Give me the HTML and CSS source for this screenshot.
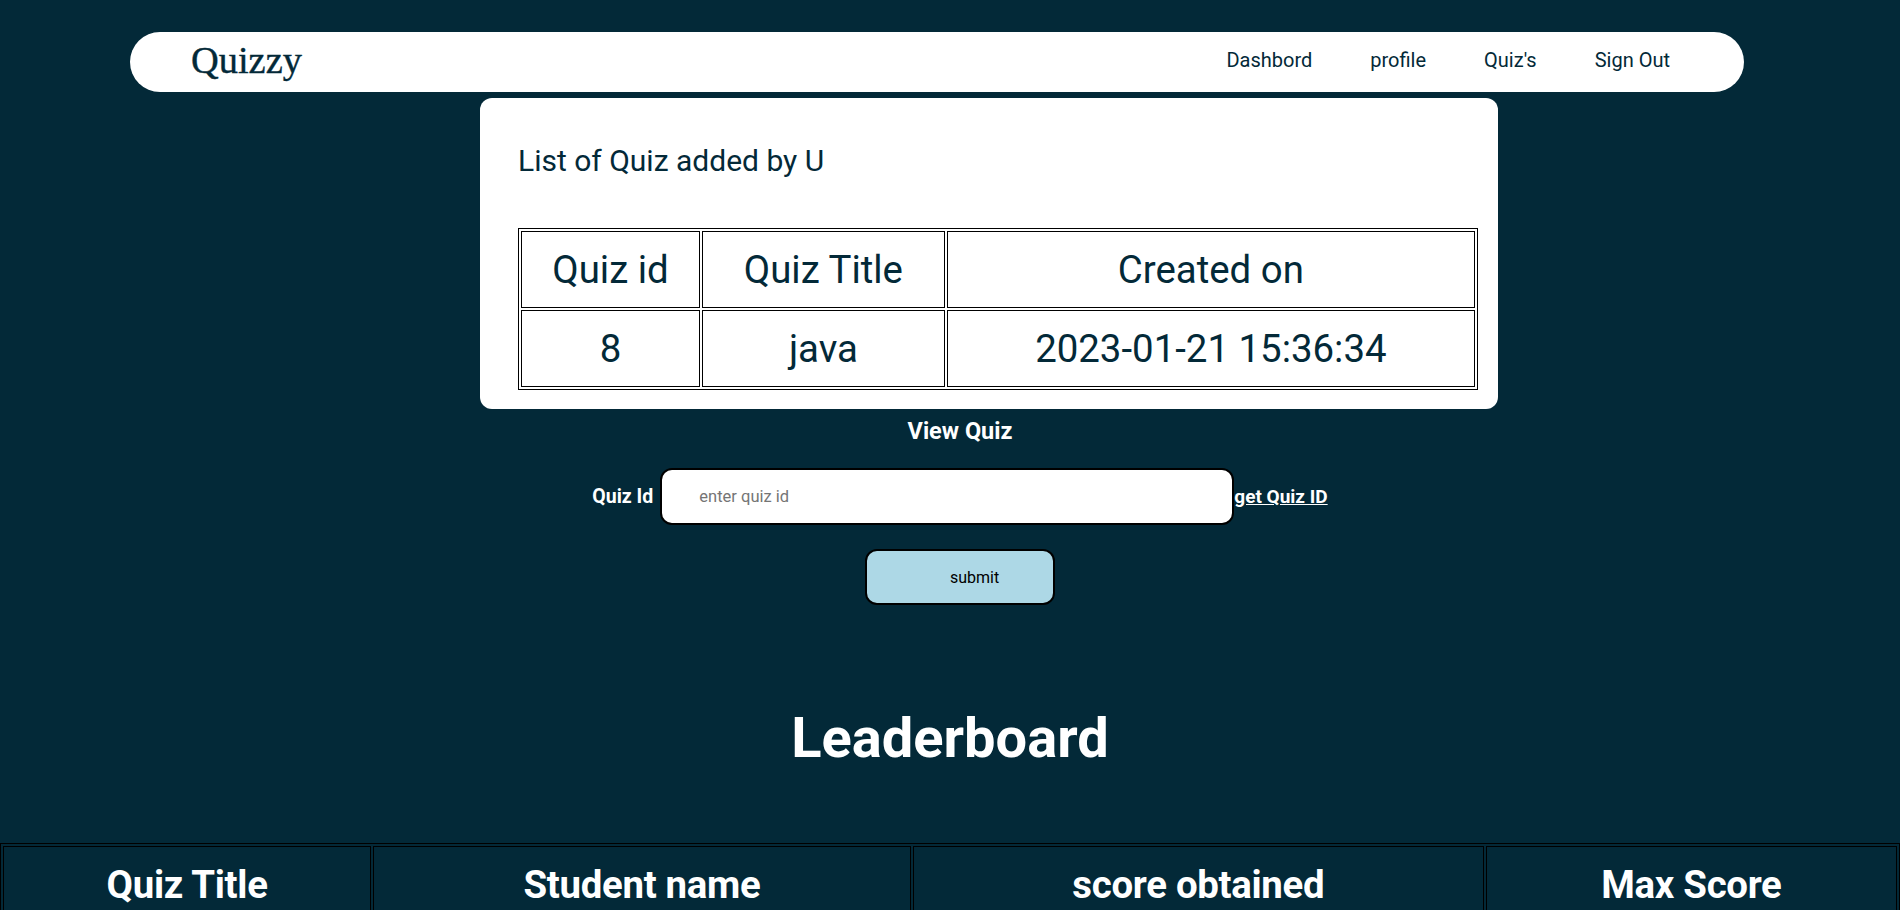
FILE: index.html
```html
<!DOCTYPE html>
<html lang="en">
<head>
<meta charset="utf-8">
<title>Quizzy</title>
<link rel="stylesheet" href="styles.css">
</head>
<body>
<nav class="nav">
  <div class="logo">Quizzy</div>
  <ul class="links">
    <li><a href="#">Dashbord</a></li>
    <li><a href="#">profile</a></li>
    <li><a href="#">Quiz's</a></li>
    <li><a href="#">Sign Out</a></li>
  </ul>
</nav>
<section class="card">
  <h2 class="card-title">List of Quiz added by U</h2>
  <table class="quiz-table">
    <tr><td>Quiz id</td><td>Quiz Title</td><td>Created on</td></tr>
    <tr><td>8</td><td>java</td><td>2023-01-21 15:36:34</td></tr>
  </table>
</section>
<form class="view-form">
  <h3 class="view-title">View Quiz</h3>
  <div class="id-row">
    <label class="id-label" for="qid">Quiz Id</label>
    <input class="id-input" id="qid" type="text" placeholder="enter quiz id">
    <a class="id-link" href="#">get Quiz ID</a>
  </div>
  <button class="submit" type="button">submit</button>
</form>
<h1 class="lb-title">Leaderboard</h1>
<table class="lb-table">
  <tr><th>Quiz Title</th><th>Student name</th><th>score obtained</th><th>Max Score</th></tr>
</table>
</body>
</html>
```
FILE: styles.css
```css
* { box-sizing: border-box; }
html, body { margin: 0; padding: 0; }
body {
  background: #032938;
  font-family: Roboto, "Liberation Sans", sans-serif;
  color: #fff;
  overflow: hidden;
  height: 910px;
}
.nav {
  margin: 32px 156px 0 130px;
  height: 60px;
  background: #fff;
  border-radius: 30px;
  display: flex;
  align-items: center;
  justify-content: space-between;
  padding: 0 45px 4px 61px;
}
.logo {
  font-family: "Liberation Serif", serif;
  font-size: 38.4px;
  color: #032938;
  -webkit-text-stroke: 0.4px #032938;
}
.links {
  list-style: none;
  margin: 0;
  padding: 0;
  display: flex;
  gap: 58px;
  padding-right: 29px;
}
.links a {
  color: #032938;
  text-decoration: none;
  font-size: 20px;
}
.card {
  margin: 6px 0 0 480px;
  width: 1018px;
  background: #fff;
  border-radius: 12px;
  padding: 45px 20px 19px 38px;
  color: #032938;
}
.card-title {
  margin: 0 0 50px;
  font-size: 30px;
  font-weight: 400;
  line-height: normal;
}
.quiz-table {
  width: 960px;
  border: 1px solid #000;
  border-spacing: 2px;
  font-size: 38.4px;
  text-align: center;
}
.quiz-table td {
  padding: 15px 1px;
  border: 1px solid #000;
}
.view-form {
  padding-left: 20px;
  display: flex;
  flex-direction: column;
  align-items: center;
}
.view-title {
  margin: 8px 0 0;
  font-size: 23.5px;
  font-weight: 700;
  line-height: normal;
}
.id-row {
  margin-top: 23px;
  display: flex;
  align-items: center;
}
.id-label {
  font-size: 19.5px;
  font-weight: 700;
  margin-right: 7px;
}
.id-input {
  width: 574px;
  height: 57px;
  border: 2px solid #000;
  border-radius: 12px;
  padding: 0 0 0 37px;
  font-family: Roboto, sans-serif;
  font-size: 16.5px;
  color: #222;
  background: #fff;
  outline: none;
}
.id-input::placeholder { color: #757575; }
.id-link {
  color: #fff;
  font-size: 19px;
  font-weight: 700;
  text-decoration: underline;
}
.submit {
  margin-top: 24px;
  height: 56px;
  width: 190px;
  padding: 0 53px 0 83px;
  background: #add8e6;
  border: 2px solid #000;
  border-radius: 12px;
  font-family: Roboto, sans-serif;
  font-size: 16px;
  color: #000;
  text-align: left;
}
.lb-title {
  margin: 100px 0 0;
  text-align: center;
  font-size: 56px;
  font-weight: 700;
  line-height: normal;
}
.lb-table {
  margin-top: 72px;
  width: 100%;
  border: 1px solid #000;
  border-spacing: 2px;
  color: #fff;
}
.lb-table th {
  padding: 15px 1px;
  font-size: 38.4px;
  font-weight: 700;
  letter-spacing: -0.3px;
  border: 1px solid #000;
}
```
